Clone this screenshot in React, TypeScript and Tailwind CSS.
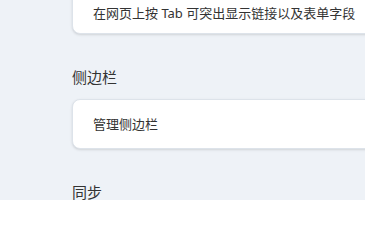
const App = () => {
  return (
    <div
      className="w-[365px] h-[200px] overflow-hidden bg-[#eef2f7] text-[#333]"
      style={{ fontFamily: '"Noto Sans", "Noto Sans CJK SC", sans-serif' }}
    >
      <div className="pl-[72px] w-[640px]">
        <div className="-mt-[40px] rounded-lg border border-[#dde3ea] bg-white px-5 pt-[42px] pb-[10px] shadow-sm">
          <p className="text-[13px] leading-5 text-[#333]">在网页上按 Tab 可突出显示链接以及表单字段</p>
        </div>

        <h2 className="mt-8 mb-[11px] text-[15px] leading-[22px] text-[#333]">侧边栏</h2>
        <div className="rounded-lg border border-[#dde3ea] bg-white px-5 py-[14px] shadow-sm">
          <p className="text-[13px] leading-5">管理侧边栏</p>
        </div>

        <h2 className="mt-8 mb-[11px] text-[15px] leading-[22px] text-[#333]">同步</h2>
      </div>
    </div>
  );
};

export default App;
